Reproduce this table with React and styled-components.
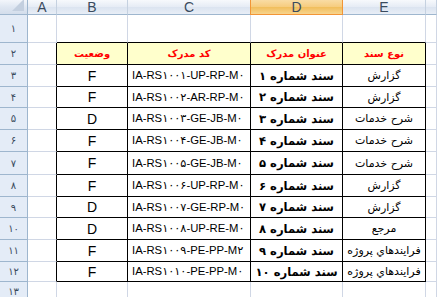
import React from "react";
import styled, { createGlobalStyle } from "styled-components";

const GlobalStyle = createGlobalStyle`
  html, body {
    margin: 0;
    padding: 0;
    background: #fff;
  }
  body {
    width: 437px;
    height: 297px;
    overflow: hidden;
  }
`;

const letters = ["A", "B", "C", "D", "E", ""];
const digits = ["۰", "۱", "۲", "۳", "۴", "۵", "۶", "۷", "۸", "۹"];
const fa = (n) =>
  String(n)
    .split("")
    .map((d) => digits[+d])
    .join("");

const docs = [
  { status: "F", code: "IA-RS۱۰۰۱-UP-RP-M۰", n: 1, type: "گزارش" },
  { status: "F", code: "IA-RS۱۰۰۲-AR-RP-M۰", n: 2, type: "گزارش" },
  { status: "D", code: "IA-RS۱۰۰۳-GE-JB-M۰", n: 3, type: "شرح خدمات" },
  { status: "F", code: "IA-RS۱۰۰۴-GE-JB-M۰", n: 4, type: "شرح خدمات" },
  { status: "F", code: "IA-RS۱۰۰۵-GE-JB-M۰", n: 5, type: "شرح خدمات" },
  { status: "F", code: "IA-RS۱۰۰۶-UP-RP-M۰", n: 6, type: "گزارش" },
  { status: "D", code: "IA-RS۱۰۰۷-GE-RP-M۰", n: 7, type: "گزارش" },
  { status: "D", code: "IA-RS۱۰۰۸-UP-RE-M۰", n: 8, type: "مرجع" },
  { status: "F", code: "IA-RS۱۰۰۹-PE-PP-M۲", n: 9, type: "فرايندهاي پروژه" },
  { status: "F", code: "IA-RS۱۰۱۰-PE-PP-M۰", n: 10, type: "فرايندهاي پروژه" },
];

// heights of rows 1..13 (row 2 holds the table header)
const rowHeights = [15, 28, 22, 22, 21, 22, 22, 23, 22, 21, 22, 22, 20];

const Sheet = styled.div`
  display: grid;
  grid-template-columns: 28px 29px 71px 123px 92px 83px 1fr;
  grid-template-rows: ${(p) => p.$rows};
  width: 437px;
  height: 297px;
  overflow: hidden;
`;

const Corner = styled.div`
  box-sizing: border-box;
  position: relative;
  background: linear-gradient(#f3f6fb, #dfe7f2 50%, #d3ddeb);
  border-right: 1px solid #9eb6ce;
  border-bottom: 1px solid #9eb6ce;

  &::after {
    content: "";
    position: absolute;
    right: 3px;
    bottom: 3px;
    border-style: solid;
    border-width: 0 0 12px 12px;
    border-color: transparent transparent #c3cfdf transparent;
  }
`;

const ColHead = styled.div`
  box-sizing: border-box;
  display: flex;
  align-items: center;
  justify-content: center;
  font-family: "Liberation Sans", Arial, sans-serif;
  font-size: 14px;
  color: #3a4b5e;
  background: ${(p) =>
    p.$selected
      ? "linear-gradient(#f9dca4, #f6cc7e 50%, #f1be5c 52%, #f7d48e)"
      : "linear-gradient(#f7f9fc, #e6ecf5 48%, #dbe4f0 52%, #e8eef6)"};
  border-right: 1px solid ${(p) => (p.$selected ? "#f29536" : "#c5d1e0")};
  border-bottom: 1px solid ${(p) => (p.$selected ? "#f29536" : "#9eb6ce")};
  ${(p) => p.$selected && "border-left: 1px solid #f29536; margin-left: -1px;"}
`;

const RowHead = styled.div`
  box-sizing: border-box;
  display: flex;
  align-items: center;
  justify-content: center;
  font-family: "DejaVu Sans", Tahoma, sans-serif;
  font-size: 10px;
  color: #3a4b5e;
  background: #e4ecf7;
  border-right: 1px solid #9eb6ce;
  border-bottom: 1px solid #9eb6ce;
  overflow: hidden;
`;

const Cell = styled.div`
  box-sizing: border-box;
  display: flex;
  align-items: center;
  justify-content: center;
  overflow: hidden;
  white-space: nowrap;
  background: #fff;
  border-right: 1px solid ${(p) => (p.$r ? "#000" : "#d0d7e5")};
  border-bottom: 1px solid ${(p) => (p.$b ? "#000" : "#d0d7e5")};
`;

const HeadCell = styled(Cell)`
  background: #ffffcc;
  color: #ff0000;
  font-family: "DejaVu Sans", Tahoma, sans-serif;
  font-weight: bold;
  font-size: 10px;
  direction: rtl;
`;

const StatusCell = styled(Cell)`
  font-family: "Liberation Sans", Arial, sans-serif;
  font-size: 14px;
  color: #000;
`;

const CodeCell = styled(Cell)`
  justify-content: flex-start;
  padding-left: 4px;
  font-family: "Liberation Sans", "DejaVu Sans", Arial, sans-serif;
  font-size: 11.3px;
  color: #000;
`;

const TitleCell = styled(Cell)`
  direction: rtl;
  font-family: "DejaVu Sans", Tahoma, sans-serif;
  font-weight: bold;
  font-size: 11.6px;
  color: #000;
`;

const TypeCell = styled(Cell)`
  direction: rtl;
  font-family: "DejaVu Sans", Tahoma, sans-serif;
  font-size: 11px;
  color: #000;
`;

export default function App() {
  const last = docs.length + 2;

  return (
    <>
      <GlobalStyle />
      <Sheet $rows={rowHeights.map((h) => `${h}px`).join(" ") + " 20px"}>
        <Corner />
        {letters.map((l, i) => (
          <ColHead key={i} $selected={l === "D"}>
            {l}
          </ColHead>
        ))}

        {/* row 1 */}
        <RowHead>{fa(1)}</RowHead>
        <Cell />
        <Cell $b />
        <Cell $b />
        <Cell $b />
        <Cell $b />
        <Cell />

        {/* row 2: table header */}
        <RowHead>{fa(2)}</RowHead>
        <Cell $r />
        <HeadCell $r $b>وضعیت</HeadCell>
        <HeadCell $r $b>کد مدرک</HeadCell>
        <HeadCell $r $b>عنوان مدرک</HeadCell>
        <HeadCell $r $b>نوع سند</HeadCell>
        <Cell />

        {docs.map((d, i) => (
          <React.Fragment key={d.n}>
            <RowHead>{fa(i + 3)}</RowHead>
            <Cell $r />
            <StatusCell $r $b>
              {d.status}
            </StatusCell>
            <CodeCell $r $b>
              {d.code}
            </CodeCell>
            <TitleCell $r $b>
              سند شماره {fa(d.n)}
            </TitleCell>
            <TypeCell $r $b>
              {d.type}
            </TypeCell>
            <Cell />
          </React.Fragment>
        ))}

        {/* row 13 */}
        <RowHead>{fa(last + 1)}</RowHead>
        <Cell />
        <Cell />
        <Cell />
        <Cell />
        <Cell />
        <Cell />
      </Sheet>
    </>
  );
}
